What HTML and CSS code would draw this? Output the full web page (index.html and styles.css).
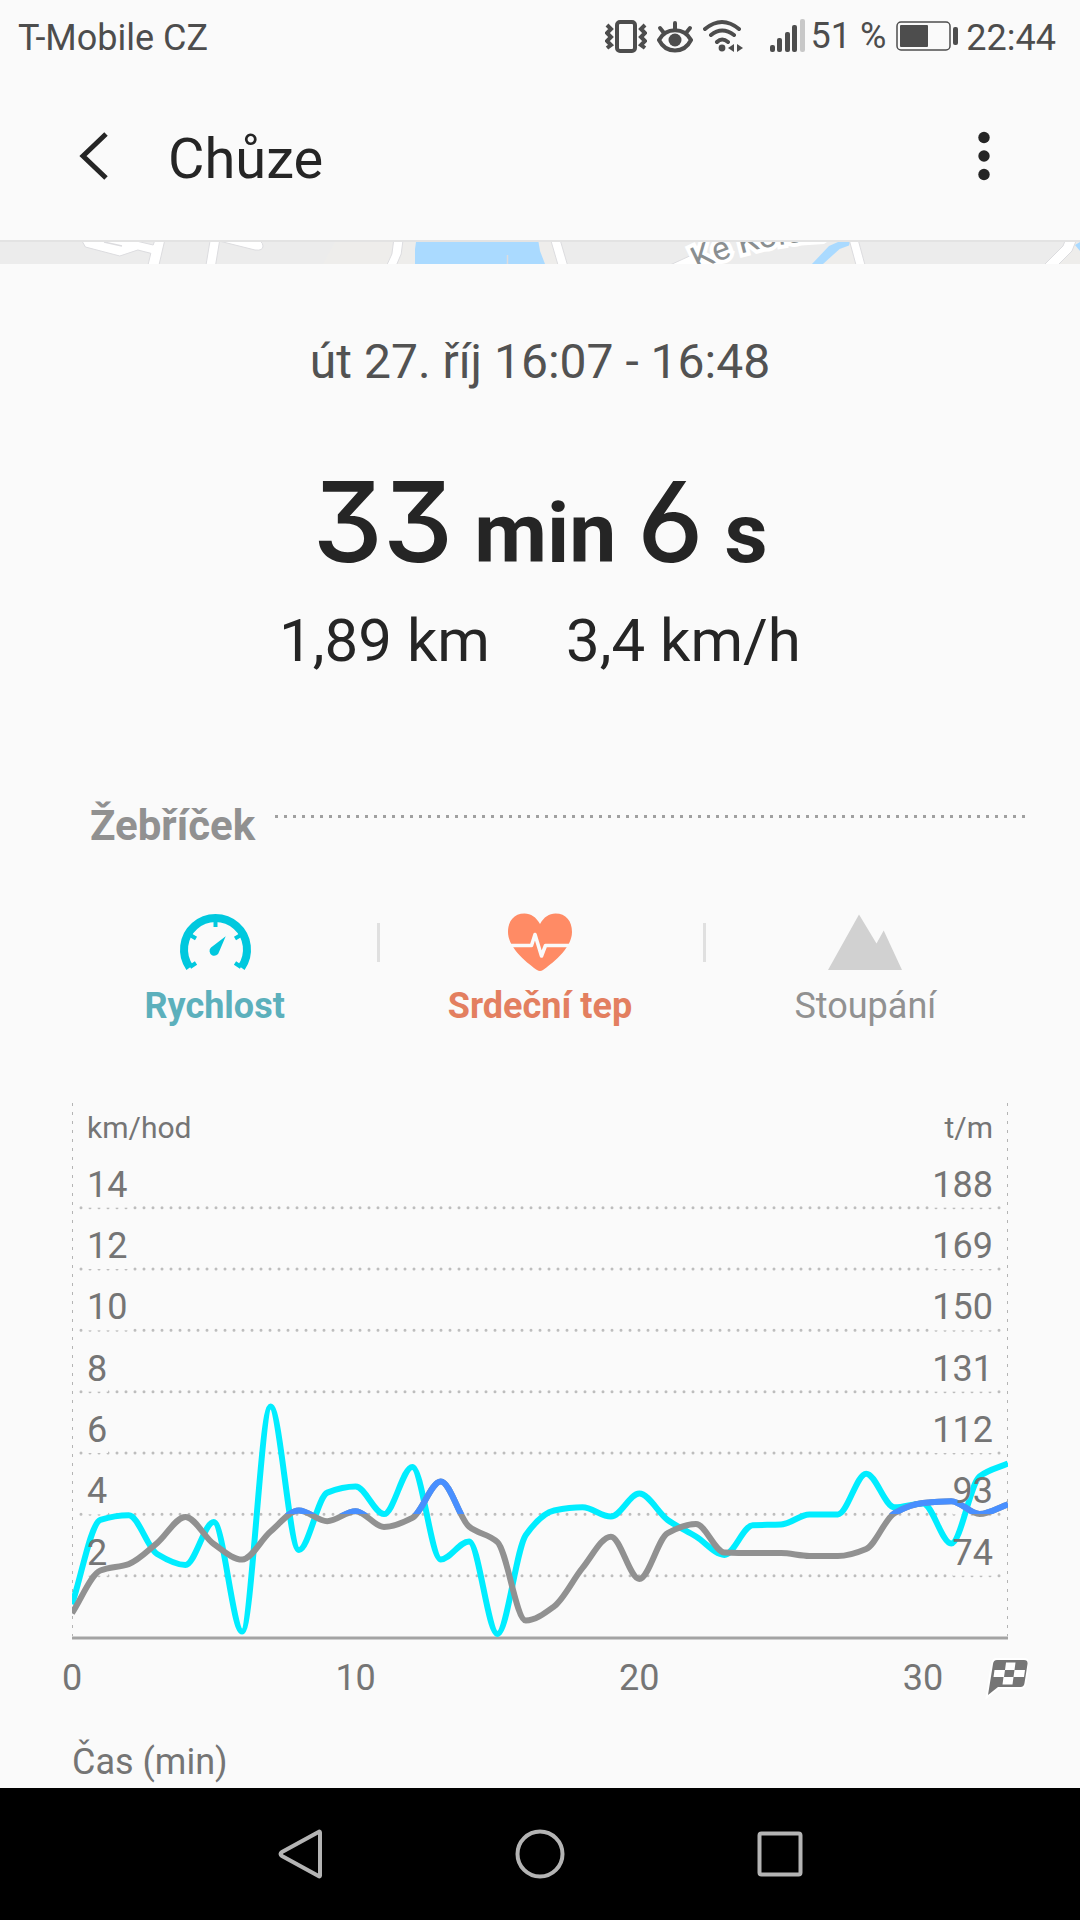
FILE: index.html
```html
<!DOCTYPE html>
<html lang="cs">

<head>
  <meta charset="utf-8" />
  <title>Chůze</title>
  <meta name="viewport" content="width=device-width, initial-scale=1" />
  <link rel="stylesheet" href="styles.css">
</head>

<body>
  <div class="status">
    <span class="status-text">T-Mobile CZ</span>
    <div class="status-icons">
      <svg width="42" height="34" viewBox="0 0 42 34" fill="none" stroke="currentColor" aria-hidden="true">
        <rect x="12" y="3" width="18" height="29" rx="3" stroke-width="4" />
        <path d="M2 6l4 4-4 4 4 4-4 4 4 4-4 3M40 6l-4 4 4 4-4 4 4 4-4 4 4 3" stroke-width="4" />
      </svg>
      <svg width="36" height="34" viewBox="0 0 36 34" fill="none" stroke="currentColor" stroke-width="4" stroke-linecap="round" aria-hidden="true">
        <path d="M2 21C9 8 27 8 34 21C27 35 9 35 2 21Z" stroke-width="4" />
        <circle cx="18" cy="21" r="6.500" fill="currentColor" stroke="none" />
        <path d="M18 4v6M3 9l4 5M33 9l-4 5" />
      </svg>
      <svg width="40" height="34" viewBox="0 0 40 34" fill="none" stroke="currentColor" stroke-width="4" stroke-linecap="round" aria-hidden="true">
        <path d="M2 10Q19 -4 36 10M8 16Q19 7 31 16M14 23Q19 18 25 23" />
        <circle cx="19" cy="29" r="3.4" fill="currentColor" stroke="none" />
        <path d="M25 29l6-4v8zM34 25l6 4-6 4z" fill="currentColor" stroke="none" />
      </svg>
      <svg class="signal" width="35" height="34" viewBox="0 0 35 34" fill="currentColor" aria-hidden="true">
        <rect x="0" y="26" width="5" height="7" rx="2" />
        <rect x="7" y="19" width="5" height="14" rx="2" />
        <rect x="15" y="13" width="5" height="20" rx="2" />
        <rect x="22" y="6" width="5" height="27" rx="2" />
        <rect x="30" y="0" width="5" height="33" rx="2" fill="#c8c8c8" />
      </svg>
      <span class="battery-level">51 %</span>
      <svg width="62" height="34" viewBox="0 0 62 34" fill="currentColor" aria-hidden="true">
        <rect x="1" y="3" width="53" height="28" rx="4" fill="none" stroke="currentColor" stroke-width="1.5" />
        <rect x="4" y="6" width="28" height="22" rx="1" />
        <rect x="57" y="8" width="5" height="18" rx="2" />
      </svg>
    </div>
    <span class="status-text">22:44</span>
  </div>

  <header class="header">
    <button class="icon-button" type="button" aria-label="Zpět">
      <svg width="32" height="52" viewBox="0 0 32 52" fill="none" stroke="currentColor" stroke-width="5">
        <path d="M29 4L6 26l23 22" />
      </svg>
    </button>
    <h1 class="title">Chůze</h1>
    <button class="icon-button" type="button" aria-label="Další možnosti">
      <svg width="32" height="52" viewBox="0 0 32 52" fill="currentColor">
        <circle cx="16" cy="7.5" r="5.7" />
        <circle cx="16" cy="26" r="5.7" />
        <circle cx="16" cy="44.5" r="5.7" />
      </svg>
    </button>
  </header>

  <svg class="map" viewBox="0 0 1080 22" preserveAspectRatio="xMidYMid slice" role="img" aria-label="Mapa">
    <rect width="1080" height="22" fill="#ececec" />
    <path d="M335 0h85v22h-97zM538 0h14l6 22h-14zM850 0l6 22h-33l17-15zM1075 0h5v22h-22z" fill="#eeedeb" />
    <!-- water -->
    <path d="M416 0h122.500l1.500 9 5 13H415V7zM850 0l-1 3.500-9.400 3.500L823 22h-11l17-18 9-4zM1080 0l-5 3 5 6z" fill="#aadaff" />
    <!-- roads -->
    <g fill="#fff" stroke="#dcdcdf" stroke-width="1">
      <path d="M82 -1l3.400 6 34.400 9 18-6 13 3.300L148 23h11l5.600-24h-10l-1.400 4-17-4z" />
      <path d="M210 -1l-4 24h9.600l4-24z" />
      <path d="M219 -1l36 9q8 1 8-4 0-3-3-5z" />
      <path d="M393.600 -1l-1.700 13-5 11h9.600l4.700-11 1.700-13z" />
      <path d="M551 -1l7 24h9.500l-7-24z" />
      <path d="M849.500 -1l6.500 24h9l-6.500-24z" />
      <path d="M1044 23l19-19 2-5h11l-4 10-14 14z" />
      <path d="M670 23l24-11 12 11z" />
    </g>
    <path d="M104 0l18 4M507.500 13v9" fill="none" stroke="#dcdcdf" stroke-width="1.500" />
    <path d="M745 0h82l-3 2-45 3z" fill="#fff" />
    <path id="street" d="M698 29Q740 6 810 -1" fill="none" />
    <text class="street"><textPath href="#street">Ke Kolo</textPath></text>
  </svg>

  <main class="content">
    <p class="date">út 27. říj 16:07 - 16:48</p>
    <p class="duration"><span class="number">33</span> min <span class="number">6</span> s</p>
    <div class="stats">
      <span>1,89 km</span>
      <span>3,4 km/h</span>
    </div>

    <h2 class="section-title">Žebříček</h2>

    <div class="tabs">
      <button class="tab speed" type="button">
        <svg width="76" height="60" viewBox="-2 0 76 60" fill="none" stroke="#00c8de" stroke-width="8" aria-hidden="true">
          <path d="M10.700 55.600A31.500 31.500 0 1 1 62.300 55.600" />
          <path d="M36.500 5v10M12 23.500l5 3M61 23.500l-5 3M11 55l6-4M62 55l-6-4" stroke-width="4" />
          <path d="M46.700 24.300L40 40A4.800 4.800 0 1 1 32 35.500Z" fill="#00c8de" stroke="none" />
        </svg>
        Rychlost
      </button>
      <button class="tab heart" type="button">
        <svg width="76" height="60" viewBox="-2 0 76 60" fill="none" aria-hidden="true">
          <path d="M36 12C32 5 27 1.500 20.500 1.500C10 1.500 4 9 4 20C4 37 26 53 33 58Q36 60 39 58C46 53 68 37 68 20C68 9 62 1.500 51.500 1.500C45 1.500 40 5 36 12Z" fill="#ff8b65" />
          <path d="M6 33.500h21.500l3.500-11 6.500 21.500 4-10.500H68" stroke="#fafafa" stroke-width="3.600" stroke-linejoin="round" />
        </svg>
        Srdeční tep
      </button>
      <button class="tab" type="button">
        <svg width="76" height="60" viewBox="-2 0 76 60" aria-hidden="true">
          <path d="M-1 58L30 2.500 47.500 31.500 54.700 18.500 73 58Z" fill="#d1d1d1" />
        </svg>
        Stoupání
      </button>
    </div>

    <svg id="chart" class="chart" viewBox="0 0 976 600" role="img" aria-label="Rychlost a srdeční tep">
      <defs>
        <clipPath id="plot"><rect x="20" y="0" width="936" height="600" /></clipPath>
        <clipPath id="zone"><rect x="20" y="0" width="936" height="414" /></clipPath>
      </defs>
      <path class="side" d="M20.500 3V536M955.500 3V536" />
      <g id="grid"></g>
      <path class="axis" d="M20 538H956" />
      <g clip-path="url(#plot)">
        <path id="speed" class="line speed-line" />
        <path id="pulse" class="line pulse-line" />
      </g>
      <path id="pulseZone" class="line zone-line" clip-path="url(#zone)" />
      <g id="labels">
        <text class="unit" x="35" y="38">km/hod</text>
        <text class="unit end" x="941" y="38">t/m</text>
      </g>
      <!-- finish flag -->
      <path d="M945 560h27q4 0 3.500 4l-3 19q-.5 4-4 4H946l-10 8 5-31q.5-4 4-4z" fill="#757575" stroke="#fff" stroke-width="4" paint-order="stroke" />
      <path d="M954 562.500h9.500l-1 7.500H953zM942.500 570h10.500l-1 7h-10.500zM962.500 570H973l-1 7h-10.500zM951.500 577h10l-1 7.500h-10z" fill="#fff" />
    </svg>
    <p class="axis-title">Čas (min)</p>
  </main>

  <nav class="nav">
    <button class="nav-button" type="button" aria-label="Zpět">
      <svg width="52" height="52" viewBox="0 0 52 52"><path d="M46 4.500V47.500Q46 49 44.500 48L8 28Q5 26 8 24L44.500 4Q46 3 46 4.500Z" /></svg>
    </button>
    <button class="nav-button" type="button" aria-label="Domů">
      <svg width="52" height="52" viewBox="0 0 52 52"><circle cx="26" cy="26" r="22.500" /></svg>
    </button>
    <button class="nav-button" type="button" aria-label="Přehled">
      <svg width="52" height="52" viewBox="0 0 52 52"><rect x="5.500" y="5.500" width="41" height="41" rx="2" /></svg>
    </button>
  </nav>

  <script src="chart.js"></script>
</body>

</html>
```

FILE: styles.css
```css
* {
  box-sizing: border-box;
}

body {
  display: flex;
  flex-direction: column;
  min-height: 100vh;
  margin: 0;
  background: #fafafa;
  color: #252525;
  font-family: Roboto, 'Liberation Sans', sans-serif;
  font-size: 36px;
  line-height: 42px;
}

h1,
h2,
p {
  margin: 0;
}

button {
  padding: 0;
  border: 0;
  background: none;
  color: inherit;
  font: inherit;
  cursor: pointer;
}

svg {
  display: block;
  flex: none;
}

.status {
  display: flex;
  align-items: center;
  height: 72px;
  padding: 0 24px 0 18px;
  color: #4d4d4d;
}

.status-text {
  padding-top: 3px;
}

.status-icons {
  display: flex;
  align-items: center;
  gap: 10px;
  margin-left: auto;
  margin-right: 8px;
}

.signal {
  margin-left: 17px;
}

.battery-level {
  margin-left: -4px;
}

.header {
  display: flex;
  align-items: center;
  height: 170px;
  padding: 0 80px 0 77px;
  border-bottom: 2px solid #e3e3e3;
}

.title {
  flex: 1;
  padding: 6px 0 0 59px;
  font-size: 56px;
  font-weight: 400;
  line-height: 64px;
}

.map {
  width: 100%;
  height: 22px;
}

.street {
  fill: #8a8f91;
  stroke: #fff;
  stroke-width: 8px;
  paint-order: stroke;
  font-size: 33px;
}

.content {
  padding: 70px 52px 0;
}

.date {
  color: #525252;
  font-size: 48px;
  line-height: 56px;
  text-align: center;
}

.duration {
  margin-top: 71px;
  font-size: 84px;
  font-weight: 700;
  line-height: 120px;
  text-align: center;
}

.number {
  font-family: Inter, Roboto, sans-serif;
  font-size: 112px;
  font-weight: 500;
  font-feature-settings: 'cv03', 'cv09';
}

.stats {
  display: flex;
  justify-content: center;
  gap: 76px;
  margin-top: 11px;
  font-size: 60px;
  line-height: 72px;
}

.section-title {
  display: flex;
  gap: 20px;
  margin-top: 125px;
  padding-left: 38px;
  color: #919191;
  font-size: 42px;
  font-weight: 700;
  line-height: 48px;
}

.section-title::after {
  content: '';
  flex: 1;
  height: 3px;
  margin-top: 13px;
  background: repeating-linear-gradient(90deg, #a0a0a0 0 3px, transparent 3px 9px);
}

.tabs {
  display: grid;
  grid-template-columns: repeat(3, 1fr);
  margin-top: 62px;
}

.tab {
  display: flex;
  flex-direction: column;
  align-items: center;
  gap: 13px;
  color: #919191;
}

.tab + .tab {
  background: linear-gradient(#e0e0e0, #e0e0e0) no-repeat 0 11px / 3px 39px;
}

.speed {
  color: #5cb0bc;
  font-weight: 700;
}

.heart {
  color: #e37f60;
  font-weight: 700;
}

.chart {
  width: 100%;
  margin-top: 73px;
}

.chart text {
  fill: #757575;
  font-size: 36px;
}

.chart .unit {
  font-size: 30px;
}

.chart .end {
  text-anchor: end;
}

.chart .tick {
  text-anchor: middle;
}

.side {
  stroke: #b4b4b4;
  stroke-width: 1;
  stroke-dasharray: 3 6;
}

.grid-line {
  stroke: #bdbdbd;
  stroke-width: 3;
  stroke-linecap: round;
  stroke-dasharray: 0 9;
}

.label-back {
  fill: #fafafa;
}

.axis {
  stroke: #a3a3a3;
  stroke-width: 3;
}

.line {
  fill: none;
  stroke-width: 6;
  stroke-linejoin: round;
}

.speed-line {
  stroke: #00edff;
}

.pulse-line {
  stroke: #919191;
}

.zone-line {
  stroke: #488fff;
}

.axis-title {
  margin-top: 41px;
  padding-left: 20px;
  color: #757575;
}

.nav {
  display: flex;
  justify-content: center;
  gap: 188px;
  height: 132px;
  margin-top: auto;
  background: #000;
}

.nav-button svg {
  fill: none;
  stroke: #b4b4b4;
  stroke-width: 4;
}
```

FILE: chart.js
```js
const speed = [1.1, 3.85, 4, 2.74, 2.38, 3.78, 0.21, 7.55, 2.87, 4.74, 4.94, 4.04, 5.58, 2.56, 3.15, 0.13, 3.36,
  4.16, 4.26, 3.96, 4.71, 3.85, 3.31, 2.71, 3.68, 3.7, 4.03, 4.03, 5.36, 4.26, 4.39, 3.08, 5.27, 5.69];
const pulse = [62.7, 75.9, 77.9, 84.4, 92.5, 84.1, 79.3, 88, 94.5, 91.2, 94.3, 89.4, 92.2, 103.5, 89.5, 84.7, 60.4,
  64.8, 76.7, 86.4, 73.3, 87.5, 90.3, 81.5, 81.3, 81.3, 80.4, 80.4, 82.6, 93.7, 96.8, 97.4, 93.4, 96.4];

const left = 20;
const right = 956;
const bottom = 538;
const rowHeight = 61.33;
const step = (right - left) / (speed.length - 1);

const add = function (parent, name, attrs, text) {
  const el = document.createElementNS('http://www.w3.org/2000/svg', name);
  Object.keys(attrs).forEach(function (key) {
    el.setAttribute(key, attrs[key]);
  });
  if (text !== undefined) {
    el.textContent = text;
  }
  document.getElementById(parent).appendChild(el);
};

// Smooth path that never overshoots its points
const smoothPath = function (ys) {
  const slopes = ys.map(function (y, i) {
    if (i === 0 || i === ys.length - 1) {
      const j = i === 0 ? 1 : i;
      return ys[j] - ys[j - 1];
    }
    const a = y - ys[i - 1];
    const b = ys[i + 1] - y;
    return a * b <= 0 ? 0 : (2 * a * b) / (a + b);
  });

  let d = `M${left} ${ys[0]}`;
  for (let i = 1; i < ys.length; i++) {
    const x = left + i * step;
    d += `C${x - step * 2 / 3} ${ys[i - 1] + slopes[i - 1] / 3} ${x - step / 3} ${ys[i] - slopes[i] / 3} ${x} ${ys[i]}`;
  }
  return d;
};

// Grid rows with both scales
for (let row = 1; row <= 7; row++) {
  const y = bottom - 1 - row * rowHeight;
  const kmh = String(row * 2);
  const bpm = String(55 + row * 19);

  add('grid', 'path', { class: 'grid-line', d: `M29 ${y}H950` });
  add('grid', 'rect', { class: 'label-back', x: 35, y: y - 4, width: kmh.length * 21, height: 4 });
  add('grid', 'rect', { class: 'label-back', x: 941 - bpm.length * 20, y: y - 4, width: bpm.length * 20, height: 4 });
  add('labels', 'text', { x: 35, y: y - 11 }, kmh);
  add('labels', 'text', { class: 'end', x: 941, y: y - 11 }, bpm);
}

[0, 10, 20, 30].forEach(function (minute) {
  add('labels', 'text', { class: 'tick', x: left + minute * step, y: 590 }, minute);
});

const pulsePath = smoothPath(pulse.map((v) => bottom - (v - 55) / 19 * rowHeight));

document.getElementById('speed').setAttribute('d', smoothPath(speed.map((v) => bottom - v / 2 * rowHeight)));
document.getElementById('pulse').setAttribute('d', pulsePath);
document.getElementById('pulseZone').setAttribute('d', pulsePath);
```
